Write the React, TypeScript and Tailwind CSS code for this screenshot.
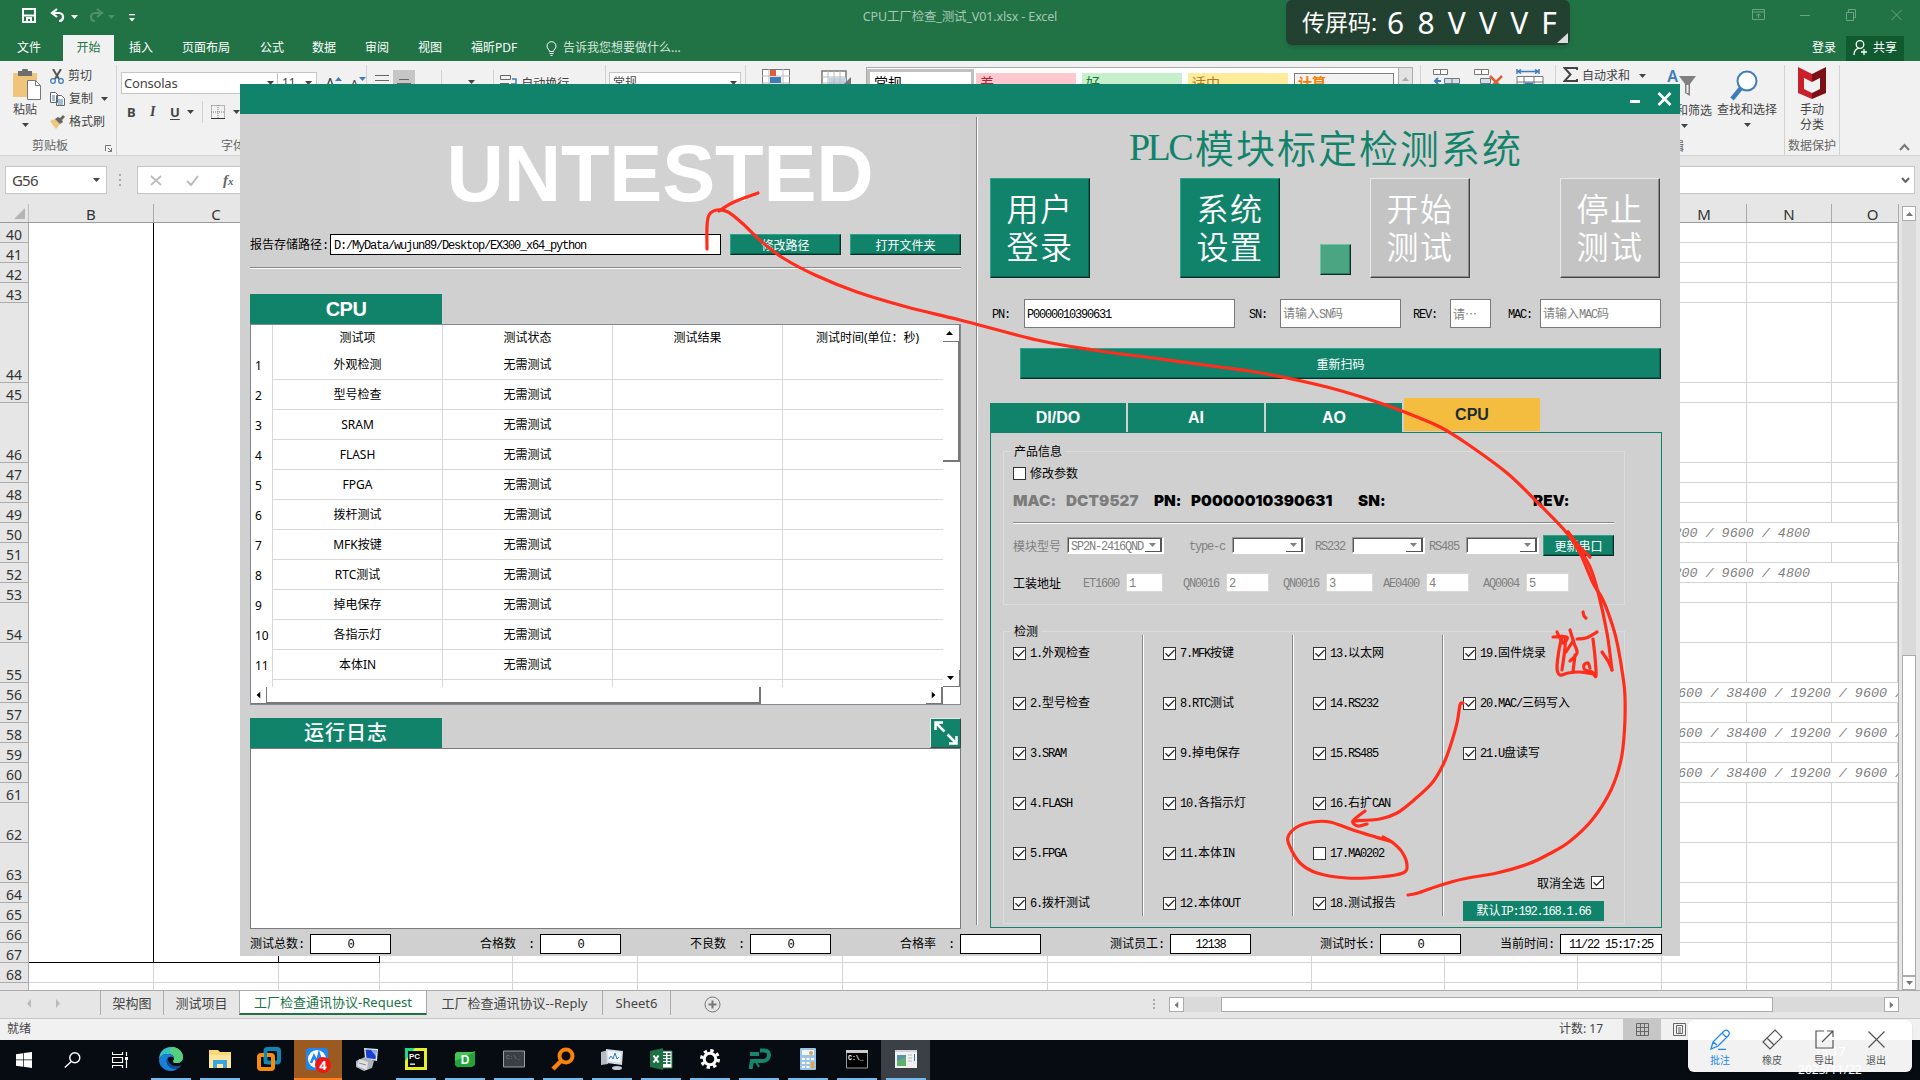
import React from "react";

const song = "font-['Noto_Sans_CJK_SC',sans-serif] text-[12px] leading-none whitespace-nowrap";

/* CJK at 12px with a 6px Latin pitch */
function Song({ children, className = "" }: { children: string; className?: string }) {
  const parts = children.split(/([\x20-\x7e]+)/).filter(Boolean);
  return (
    <span className={`${song} whitespace-pre ${className}`}>
      {parts.map((p, i) =>
        /^[\x20-\x7e]/.test(p) ? (
          <span key={i} className="font-['Liberation_Mono',monospace] text-[12px] tracking-[-1.2px]">
            {p}
          </span>
        ) : (
          p
        ),
      )}
    </span>
  );
}

const Down = ({ className = "" }: { className?: string }) => (
  <svg className={`h-1 w-[7px] shrink-0 ${className}`} viewBox="0 0 7 4">
    <path d="M0 0h7L3.5 4z" fill="currentColor" />
  </svg>
);

/* ---------- Excel title + tabs ---------- */

function TitleBar() {
  return (
    <div className="flex h-[35px] items-start">
      <div className="flex w-[240px] shrink-0 pl-[22px] pt-2 text-white">
        <svg className="h-[15px] w-[14px]" viewBox="0 0 14 15" fill="none" stroke="#fff" strokeWidth="2">
          <path d="M1 1h12v13H1zM1 7.500h12M5 14v-4h4v4" />
        </svg>
        <svg className="ml-[14px] h-[14px] w-4" viewBox="0 0 16 14" fill="none" stroke="#fff" strokeWidth="2.2">
          <path d="M7 1L2 5l5 4M2 5h7a4 4 0 014 4.500 4 4 0 01-4 3.500" />
        </svg>
        <Down className="ml-[5px] mt-[7px] w-[6px]" />
        <svg className="ml-[10px] h-[14px] w-4" viewBox="0 0 16 14" fill="none" stroke="#4f9069" strokeWidth="2.2">
          <path d="M9 1l5 4-5 4M14 5H7a4 4 0 00-4 4.500 4 4 0 004 3.500" />
        </svg>
        <Down className="ml-[4px] mt-[7px] w-[6px] text-[#4f9069]" />
        <svg className="ml-[14px] mt-[6px] h-2 w-[6px]" viewBox="0 0 6 8">
          <path d="M0 0h6v1.200H0zM0 4h6L3 7.500z" fill="#fff" />
        </svg>
      </div>
      <div className="flex h-[34px] flex-1 items-center justify-center">
        <span className="text-[12.5px] text-[#a6c8b4] tracking-[-0.15px]">CPU工厂检查_测试_V01.xlsx - Excel</span>
      </div>
      <div className="flex w-[240px] shrink-0 items-center pt-[8px] text-[#6ca286]">
        <svg className="ml-[72px] h-[13px] w-[13px]" viewBox="0 0 13 13" fill="none" stroke="currentColor">
          <path d="M.5 1.500h12v10H.5zM.5 4h12M6.500 10V6M4.500 7.800l2-2 2 2" />
        </svg>
        <svg className="ml-[35px] h-[13px] w-[10px]" viewBox="0 0 10 13" stroke="currentColor">
          <path d="M0 7.500h10" />
        </svg>
        <svg className="ml-[36px] h-[13px] w-[10px]" viewBox="0 0 10 13" fill="none" stroke="currentColor">
          <path d="M.5 4.500h7v8h-7zM2.500 4V1.500h7v8H8" />
        </svg>
        <svg className="ml-[35px] h-[13px] w-[11px]" viewBox="0 0 11 13" stroke="currentColor">
          <path d="M.5 2l10 10M10.500 2l-10 10" />
        </svg>
      </div>
    </div>
  );
}

function Tabs() {
  const tab = "shrink-0";
  return (
    <div className="flex h-[26px] items-center text-[12px] leading-none text-white whitespace-nowrap">
      <span className={`${tab} w-[46px] ml-[17px]`}>文件</span>
      <span className="flex h-full w-[51px] items-center justify-center bg-[#f1f1f1] text-[#217346]">开始</span>
      <span className={`${tab} ml-[15px] w-[53px]`}>插入</span>
      <span className={`${tab} w-[78px]`}>页面布局</span>
      <span className={`${tab} w-[52px]`}>公式</span>
      <span className={`${tab} w-[53px]`}>数据</span>
      <span className={`${tab} w-[53px]`}>审阅</span>
      <span className={`${tab} w-[53px]`}>视图</span>
      <span className={`${tab} w-[75px]`}>福昕PDF</span>
      <svg className="h-[15px] w-[11px] shrink-0" viewBox="0 0 11 15" fill="none" stroke="#fff">
        <path d="M3.500 10.500c0-2-2.500-2.700-2.500-5.300a4.500 4.500 0 019 0c0 2.600-2.500 3.300-2.500 5.300zM3.500 12.500h4M4.500 14.500h2" />
      </svg>
      <span className="ml-[6px] text-[#d7e6dd]">告诉我您想要做什么...</span>
      <span className="ml-auto">登录</span>
      <span className="ml-[10px] mr-4 flex h-[25px] w-[58px] items-center justify-center gap-[5px] bg-[#0f5a2f]">
        <svg className="h-4 w-[15px]" viewBox="0 0 15 16" fill="none" stroke="#fff" strokeWidth="1.300">
          <circle cx="7" cy="4.500" r="3.800" />
          <path d="M1 15c0-4 2-6 5-6.800M11 9v6M8 12h6" />
        </svg>
        共享
      </span>
    </div>
  );
}

/* ---------- Ribbon ---------- */

const group = "h-[90px] shrink-0 border-r border-[#d2d2d2] mt-1 overflow-hidden";

function Ribbon() {
  return (
    <div className="flex h-[95px] border-b border-[#d2d2d2] bg-[#f1f1f1] text-[12px] leading-none text-[#444] whitespace-nowrap">
      <div className={`${group} flex w-[117px] flex-col`}>
        <div className="flex h-[72px]">
          <div className="flex w-[50px] flex-col items-center pt-1">
            <svg className="ml-[3px] h-[31px] w-7" viewBox="0 0 28 31">
              <path d="M0 4h24v24H0z" fill="#eec57b" />
              <path d="M5 2h4a3 3 0 016 0h4v5H5z" fill="#6d6d6d" />
              <path d="M14.500 11.500h8l5 5v14h-13z" fill="#fff" stroke="#777" />
              <path d="M22.500 11.500v5h5" fill="none" stroke="#777" />
            </svg>
            <span className="mt-1">粘贴</span>
            <Down className="mt-[7px]" />
          </div>
          <div className="flex flex-col gap-[5px] pt-[2px]">
            <div className="flex h-[18px] items-center gap-1">
              <svg className="h-[15px] w-[14px]" viewBox="0 0 14 15" fill="none">
                <path d="M3 0l6 10M11 0L5 10" stroke="#555" strokeWidth="2" />
                <circle cx="3" cy="12" r="2.300" stroke="#3f7cba" strokeWidth="1.300" />
                <circle cx="11" cy="12" r="2.300" stroke="#3f7cba" strokeWidth="1.300" />
              </svg>
              剪切
            </div>
            <div className="flex h-[18px] items-center gap-1">
              <svg className="h-[14px] w-[15px]" viewBox="0 0 15 14" fill="#fff" stroke="#666">
                <path d="M.5.5h5l2 2v8h-7zM6.500 3.500h5l3 3v7h-8z" />
                <path d="M2 4h3M2 6h3M2 8h3M8 8h5M8 10h5M8 12h5" stroke="#3f7cba" />
              </svg>
              复制
              <Down className="ml-[4px]" />
            </div>
            <div className="flex h-[18px] items-center gap-1">
              <svg className="h-[14px] w-[15px]" viewBox="0 0 15 14">
                <path d="M0 6l5-2 5 5-4 5z" fill="#eec57b" />
                <path d="M5 4l3-2 2 1 3-3 2 2-3 3 1 2-3 2z" fill="#666" />
              </svg>
              格式刷
            </div>
          </div>
        </div>
        <div className="flex h-[18px] items-center justify-end text-[#666]">
          剪贴板
          <svg className="ml-[37px] mr-[4px] mt-1 h-[7px] w-[7px]" viewBox="0 0 7 7" fill="none" stroke="#777">
            <path d="M.5 6V.5H6M3 3l3.500 3.500M6.500 3v3.500H3" />
          </svg>
        </div>
      </div>
      <div className={`${group} flex w-[250px] flex-col pl-1`}>
        <div className="mt-[7px] flex h-[22px] shrink-0">
          <div className="flex w-[157px] items-center justify-between border border-[#c6c6c6] bg-white px-[2px] text-[13px] tracking-[-0.2px]">
            Consolas
            <Down className="mr-px" />
          </div>
          <div className="flex w-[39px] items-center justify-between border border-l-0 border-[#c6c6c6] bg-white px-1 text-[12px]">
            11
            <Down />
          </div>
          <span className="ml-2 mt-1 text-[16px]">A</span>
          <svg className="mt-1 h-2 w-[7px]" viewBox="0 0 7 8">
            <path d="M0 5l3.500-4L7 5z" fill="#3f7cba" />
          </svg>
          <span className="ml-[8px] mt-[6px] text-[13px]">A</span>
          <svg className="mt-1 h-2 w-[7px]" viewBox="0 0 7 8">
            <path d="M0 1h7L3.500 5z" fill="#3f7cba" />
          </svg>
        </div>
        <div className="flex h-[36px] shrink-0 items-center font-['Noto_Sans'] text-[13px] text-[#444]">
          <b className="ml-[6px] w-[23px]">B</b>
          <i className="w-[20px] font-['Liberation_Serif'] text-[14px] font-bold">I</i>
          <b className="w-[17px] underline underline-offset-2">U</b>
          <Down />
          <span className="ml-2 h-[22px] w-px bg-[#d2d2d2]" />
          <svg className="ml-2 h-[14px] w-[14px]" viewBox="0 0 14 14" fill="none" stroke="#777" strokeDasharray="1 1">
            <path d="M.5.5h13v13M.5.5v13M7 0v13M0 7h13" />
            <path d="M0 13.500h14" stroke="#333" strokeDasharray="none" />
          </svg>
          <Down className="ml-2" />
        </div>
        <div className="flex h-[20px] items-center pl-[100px] pt-[11px] text-[#666]">字体</div>
      </div>
      <div className={`${group} flex w-[239px] pt-[5px]`}>
        <svg className="ml-2 mt-[5px] h-5 w-[14px]" viewBox="0 0 14 20" stroke="#666">
          <path d="M0 .5h14M0 5.500h14M0 9.500h14" />
        </svg>
        <div className="ml-1 h-5 w-[22px] bg-[#c6c6c6]">
          <svg className="ml-1 mt-[9px] h-3 w-[14px]" viewBox="0 0 14 12" stroke="#666">
            <path d="M2 .5h10M0 4.500h14" />
          </svg>
        </div>
        <span className="ml-[26px] h-5 w-px bg-[#d2d2d2]" />
        <span className="ml-2 mt-[3px] -rotate-45 text-[12px]">ab</span>
        <Down className="ml-1 mt-[10px]" />
        <span className="ml-[18px] h-5 w-px bg-[#d2d2d2]" />
        <svg className="ml-[6px] mt-[5px] h-3 w-[17px]" viewBox="0 0 17 12" fill="none">
          <path d="M.5.5h10v4H.5zM0 8.500h9" stroke="#666" />
          <path d="M12 4h4v5h-5" stroke="#3f7cba" strokeWidth="1.500" />
        </svg>
        <span className="ml-[4px] mt-[8px]">自动换行</span>
      </div>
      <div className={`${group} w-[140px] pl-[3px]`}>
        <div className="mt-[7px] flex h-[22px] w-[132px] items-center justify-between border border-[#c6c6c6] bg-white px-[3px] text-[12px]">
          常规 <Down />
        </div>
      </div>
      <div className={`${group} flex w-[675px]`}>
        <svg className="ml-4 mt-1 h-[26px] w-7" viewBox="0 0 28 26">
          <path d="M0 0h28v26H0z" fill="#fff" stroke="#777" strokeWidth="2" />
          <path d="M0 7h28M0 14h28M7 0v26M21 0v26" stroke="#bbb" />
          <path d="M8 1h6v6H8zM8 15h10v6H8z" fill="#d9603b" />
          <path d="M8 8h11v6H8z" fill="#3f7cba" />
        </svg>
        <svg className="ml-[31px] mt-[5px] h-[26px] w-[30px]" viewBox="0 0 30 26">
          <path d="M1 1h24v25H1z" fill="#fff" stroke="#777" strokeWidth="1.500" />
          <path d="M8 8h17v18H8z" fill="#bfd3e9" />
          <path d="M1 7h24M1 13h24M7 1v25M13 1v25M19 1v25" stroke="#bbb" />
          <path d="M21 16l9-9v11z" fill="#777" />
        </svg>
        <div className="ml-[15px] mt-[2px] flex h-[60px] w-[533px] border border-[#ababab] bg-white text-[14px]">
          <div className="mt-[1px] h-10 w-[107px] border-[3px] border-[#c0c0c0] pl-1 pt-[4px] text-black">常规</div>
          <div className="ml-[2px] mt-[5px] h-8 w-[100px] bg-[#ffc7ce] pl-1 pt-[3px] text-[#b02030]">差</div>
          <div className="ml-[6px] mt-[5px] h-8 w-[100px] bg-[#c6efce] pl-1 pt-[3px] text-[#1c7430]">好</div>
          <div className="ml-[6px] mt-[5px] h-8 w-[100px] bg-[#ffeb9c] pl-1 pt-[3px] text-[#b07a20]">适中</div>
          <div className="ml-[6px] mt-[5px] h-8 w-[100px] border border-[#7f7f7f] bg-[#f2f2f2] pl-[3px] pt-[2px] font-bold text-[#fa7d00]">计算</div>
        </div>
        <div className="mt-[2px] flex h-[24px] w-[14px] items-center justify-center border border-l-0 border-[#ababab] bg-[#e3e3e3] text-[#ababab]">
          <Down className="rotate-180" />
        </div>
      </div>
      <div className={`${group} flex w-[135px] pt-1`}>
        <svg className="ml-3 h-[26px] w-[27px]" viewBox="0 0 27 26" fill="#fff" stroke="#777">
          <path d="M.5.5h14v5H.5zM7.500.5v5" />
          <path d="M11.500 9.500h15v5h-15zM19 9.500v5" fill="#cfe0f3" />
          <path d="M8 12H2M5 9l-3 3 3 3" stroke="#3f7cba" strokeWidth="2" fill="none" />
        </svg>
        <svg className="ml-[14px] h-[26px] w-[29px]" viewBox="0 0 29 26" fill="#fff" stroke="#777">
          <path d="M.5.5h14v5H.5zM7.500.5v5" />
          <path d="M6.500 9.500h10v5h-10z" fill="#cfe0f3" />
          <path d="M16 7l12 12M28 7L16 19" stroke="#d9603b" strokeWidth="2.500" />
        </svg>
        <svg className="ml-[13px] h-[26px] w-7" viewBox="0 0 28 26" fill="none" stroke="#777">
          <path d="M1 0v5M23 0v5M2 2.500h20M5 .5l-3 2 3 2M19 .5l3 2-3 2" stroke="#3f7cba" strokeWidth="1.500" />
          <path d="M1 7.500h26v20H1zM1 13h26M8 7v16M18 7v16" fill="#fff" />
          <path d="M9 13.500h8v8H9z" fill="#3f7cba" stroke="none" />
        </svg>
      </div>
      <div className={`${group} flex w-[229px]`}>
        <svg className="ml-[7px] mt-[2px] h-[15px] w-[15px]" viewBox="0 0 15 15" fill="none" stroke="#444" strokeWidth="2">
          <path d="M14 3V1H1.500l6 6.500-6 6.500H14v-2" />
        </svg>
        <span className="ml-1 mt-[5px]">自动求和</span>
        <Down className="ml-[9px] mt-[9px]" />
        <div className="ml-[4px] flex w-[60px] flex-col items-end pt-[3px]">
          <div className="mr-[14px] flex">
            <b className="mr-px font-['Noto_Sans'] text-[16px] font-semibold leading-none text-[#3f7cba]">A</b>
            <svg className="mt-2 h-5 w-[17px]" viewBox="0 0 17 20">
              <path d="M0 0h17l-6 8v12l-5-3V8z" fill="#808080" />
              <path d="M7.500 9h2v8h-2z" fill="#f1f1f1" />
            </svg>
          </div>
          <span className="mr-[-2px] mt-[9px]">排序和筛选</span>
          <Down className="mr-[22px] mt-[7px]" />
          <span className="mr-[26px] mt-[13px] text-[#666]">编辑</span>
        </div>
        <div className="ml-[7px] flex w-[60px] flex-col items-center pt-[4px]">
          <svg className="ml-[-6px] h-[33px] w-[28px]" viewBox="0 0 28 33" fill="none" stroke="#3f7cba">
            <path d="M2 30l9-11" strokeWidth="4.500" />
            <circle cx="17" cy="12" r="9.500" strokeWidth="2" fill="#fff" />
          </svg>
          <span className="mt-[2px]">查找和选择</span>
          <Down className="mt-[7px]" />
        </div>
      </div>
      <div className={`${group} flex w-[55px] flex-col items-center pt-[2px]`}>
        <svg className="h-[32px] w-[28px]" viewBox="0 0 28 32">
          <path d="M0 0l14 7v8l-8-4v11l8 4v6L0 26z" fill="#c8202b" />
          <path d="M28 0L14 7v8l8-4v11l-8 4v6l14-6z" fill="#7d1016" />
        </svg>
        <span className="mt-[5px]">手动</span>
        <span className="mt-[3px]">分类</span>
        <span className="mt-[9px] text-[#666]">数据保护</span>
      </div>
      <svg className="ml-auto mr-[10px] mt-[82px] h-2 w-[11px]" viewBox="0 0 11 8" fill="none" stroke="#777" strokeWidth="2">
        <path d="M1 7l4.500-5L10 7" />
      </svg>
    </div>
  );
}

function FormulaBar() {
  return (
    <div className="flex h-[48px] items-start bg-[#e6e6e6] pt-[10px]">
      <div className="ml-[5px] flex h-7 w-[102px] items-center justify-between border border-[#c6c6c6] bg-white px-[6px] text-[15px] text-[#444]">
        <span className="tracking-[-0.8px] font-['Noto_Sans']">G56</span>
        <Down />
      </div>
      <div className="ml-3 mt-2 flex w-[18px] flex-col gap-[3px]">
        <span className="h-[2px] w-[2px] bg-[#aaa]" />
        <span className="h-[2px] w-[2px] bg-[#aaa]" />
        <span className="h-[2px] w-[2px] bg-[#aaa]" />
      </div>
      <div className="flex h-7 w-[1778px] items-center border border-[#c6c6c6] bg-white">
        <svg className="ml-3 h-[11px] w-3" viewBox="0 0 12 11" stroke="#bbb" strokeWidth="1.700">
          <path d="M1 1l10 9M11 1L1 10" />
        </svg>
        <svg className="ml-6 h-[11px] w-[13px]" viewBox="0 0 13 11" fill="none" stroke="#bbb" strokeWidth="2">
          <path d="M1 6l4 4 7-9" />
        </svg>
        <i className="ml-6 font-['Liberation_Serif'] text-[15px] font-bold leading-none text-[#666]">
          f<span className="text-[11px]">x</span>
        </i>
        <svg className="ml-auto mr-1 h-[6px] w-[9px]" viewBox="0 0 9 6" fill="none" stroke="#666" strokeWidth="2">
          <path d="M1 1l3.500 4L8 1" />
        </svg>
      </div>
    </div>
  );
}

/* ---------- Sheet ---------- */

const colWidths = [125, 125, 101, 133, 125, 205, 205, 264, 133, 133, 84, 85, 85, 66];
const colNames = ["B", "C", "D", "E", "F", "G", "H", "I", "J", "K", "L", "M", "N", "O"];
const rowHeights: [number, number][] = [
  [40, 20], [41, 20], [42, 20], [43, 20], [44, 80], [45, 20], [46, 60], [47, 20], [48, 20], [49, 20],
  [50, 20], [51, 20], [52, 20], [53, 20], [54, 40], [55, 40], [56, 20], [57, 20], [58, 20], [59, 20],
  [60, 20], [61, 20], [62, 40], [63, 40], [64, 20], [65, 20], [66, 20], [67, 20], [68, 20], [69, 20],
];
const spill: Record<number, string> = {
  50: "19200 / 9600 / 4800",
  52: "19200 / 9600 / 4800",
  56: "57600 / 38400 / 19200 / 9600 / 4800",
  58: "57600 / 38400 / 19200 / 9600 / 4800",
  60: "57600 / 38400 / 19200 / 9600 / 4800",
};

function Sheet() {
  return (
    <div className="flex h-[786px] bg-[#e6e6e6]">
      <div className="flex w-[1899px] flex-col overflow-hidden border-r border-[#ababab]">
        <div className="flex h-[19px] shrink-0 border-b border-[#9b9b9b] text-[15px] leading-none text-[#333]">
          <div className="flex w-[29px] shrink-0 items-end justify-end border-r border-[#bcbcbc] pb-[3px] pr-[3px]">
            <svg className="h-[11px] w-[11px]" viewBox="0 0 11 11">
              <path d="M11 0v11H0z" fill="#b5b5b5" />
            </svg>
          </div>
          {colNames.map((n, i) => (
            <div
              key={n}
              className="flex shrink-0 items-center justify-center border-r border-[#ababab] pt-[2px]"
              style={{ width: i === 13 ? 82 : colWidths[i] }}
            >
              {n}
            </div>
          ))}
        </div>
        {rowHeights.map(([n, h]) => (
          <div key={n} className="flex shrink-0" style={{ height: h }}>
            <div className="flex w-[29px] shrink-0 items-end justify-center border-b border-r border-[#ababab] font-['Noto_Sans'] text-[14px] leading-[14px] tracking-[-0.1px] text-[#333]">
              {n}
            </div>
            {colWidths.map((w, i) => {
              if (spill[n] && i > 10) return null;
              if (n <= 67 && i < 3)
                return (
                  <div
                    key={i}
                    className={`shrink-0 border-r border-r-black bg-white ${n === 67 ? "border-b border-b-black" : ""}`}
                    style={{ width: w }}
                  />
                );
              return <div key={i} className="shrink-0 border-b border-r border-[#d4d4d4] bg-white" style={{ width: w }} />;
            })}
            {spill[n] && (
              <div
                className={`flex w-[236px] shrink-0 items-center overflow-hidden border-b border-[#d4d4d4] bg-white pt-[3px] font-['Liberation_Mono'] text-[13.4px] italic leading-none text-[#808080] whitespace-nowrap ${
                  n < 55 ? "justify-end pr-[88px]" : ""
                }`}
              >
                {spill[n]}
              </div>
            )}
          </div>
        ))}
      </div>
      <div className="ml-[3px] mt-[2px] flex h-[784px] w-[14px] flex-col bg-[#dadada]">
        <div className="flex h-[15px] items-center justify-center border border-[#ababab] bg-white text-[#777]">
          <Down className="rotate-180" />
        </div>
        <div className="mt-[434px] h-[321px] border border-[#ababab] bg-white" />
        <div className="flex h-[14px] items-center justify-center border border-[#ababab] bg-white text-[#777]">
          <Down />
        </div>
      </div>
    </div>
  );
}

function SheetTabs() {
  return (
    <div className="flex h-[29px] items-start border-t border-[#ababab] border-b border-b-[#c6c6c6] bg-[#e6e6e6] text-[13px] leading-none text-[#444] whitespace-nowrap">
      <svg className="ml-[27px] mt-2 h-[9px] w-[34px] shrink-0" viewBox="0 0 34 9" fill="#bbb">
        <path d="M4 0v9L0 4.500zM29 0v9l4-4.500z" />
      </svg>
      <div className="ml-[39px] flex h-6 w-[63px] items-center justify-center border-l border-[#ababab]">架构图</div>
      <div className="flex h-6 w-[76px] items-center justify-center border-l border-[#ababab]">测试项目</div>
      <div className="flex h-6 w-[188px] items-center justify-center border-b-2 border-l border-r border-[#ababab] border-b-[#217346] bg-white text-[#217346]">
        工厂检查通讯协议-Request
      </div>
      <div className="flex h-6 w-[176px] items-center justify-center border-r border-[#ababab]">工厂检查通讯协议--Reply</div>
      <div className="flex h-6 w-[68px] items-center justify-center border-r border-[#ababab]">Sheet6</div>
      <svg className="ml-[33px] mt-[5px] h-[17px] w-[17px]" viewBox="0 0 17 17" fill="none" stroke="#777">
        <circle cx="8.500" cy="8.500" r="7.500" />
        <path d="M8.500 4.500v8M4.500 8.500h8" strokeWidth="2" />
      </svg>
      <div className="ml-auto mr-[14px] mt-2 flex flex-col gap-[2px]">
        <span className="h-[2px] w-[2px] bg-[#aaa]" />
        <span className="h-[2px] w-[2px] bg-[#aaa]" />
        <span className="h-[2px] w-[2px] bg-[#aaa]" />
      </div>
      <div className="mr-[21px] mt-[6px] flex h-[15px] w-[730px] bg-[#dadada]">
        <div className="flex w-[15px] items-center justify-center border border-[#ababab] bg-white text-[#777]">
          <Down className="rotate-90" />
        </div>
        <div className="ml-[37px] w-[552px] border border-[#ababab] bg-white" />
        <div className="ml-auto flex w-[15px] items-center justify-center border border-[#ababab] bg-white text-[#777]">
          <Down className="-rotate-90" />
        </div>
      </div>
    </div>
  );
}

function StatusBar() {
  return (
    <div className="flex h-[21px] items-center bg-[#f1f1f1] text-[12px] leading-none text-[#444]">
      <span className="ml-[7px] pb-[2px]">就绪</span>
      <span className="ml-[1528px] pb-[2px]">计数: 17</span>
      <div className="ml-auto mr-[8px] flex h-full w-[289px] items-center">
        <div className="flex h-full w-[38px] items-center justify-center bg-[#c6c6c6]">
          <svg className="h-[13px] w-[13px]" viewBox="0 0 13 13" fill="none" stroke="#666">
            <path d="M.5.5h12v12H.5zM.5 4.500h12M.5 8.500h12M4.500.5v12M8.500.5v12" />
          </svg>
        </div>
        <svg className="ml-3 h-[13px] w-[13px]" viewBox="0 0 13 13" fill="none" stroke="#666">
          <path d="M.5.5h12v12H.5zM3.500 2.500h6v8h-6zM5 5h3M5 7h3M5 9h3" />
        </svg>
      </div>
    </div>
  );
}

/* ---------- Taskbar ---------- */

function TaskIcon({ children, bar = true, bg = "" }: { children: React.ReactNode; bar?: boolean; bg?: string }) {
  return (
    <div className={`flex h-10 w-[49px] shrink-0 flex-col items-center ${bg}`}>
      <div className="flex h-[38px] items-center">
        <svg className="h-6 w-6" viewBox="0 0 24 24">
          {children}
        </svg>
      </div>
      {bar && <div className="h-[2px] w-10 bg-[#76b9ed]" />}
    </div>
  );
}

const cmdFont = "font-['Liberation_Mono']";

function Taskbar() {
  return (
    <div className="relative flex h-10 bg-[#070b12]">
      <div className="flex w-[146px] shrink-0">
        <div className="flex w-12 items-center justify-center">
          <svg className="h-4 w-4" viewBox="0 0 16 16" fill="#fff">
            <path d="M0 2.300L7 1.200v6.300H0zM7.700 1.100L16 0v7.500H7.700zM0 8.300h7v6.400L0 13.700zM7.700 8.300H16V16l-8.300-1.200z" />
          </svg>
        </div>
        <div className="flex w-12 items-center justify-center">
          <svg className="h-4 w-[17px]" viewBox="0 0 17 16" fill="none" stroke="#fff" strokeWidth="1.400">
            <circle cx="10.800" cy="5.800" r="5" />
            <path d="M7.300 9.500L.8 15.500" />
          </svg>
        </div>
        <div className="flex w-12 items-center justify-center">
          <svg className="h-4 w-[17px]" viewBox="0 0 17 16" fill="none" stroke="#fff">
            <path d="M.5 0v2.500h10V0M.5 5.500h10v5H.5zM.5 16v-2.500h10V16M14.500 0v4M14.500 8v8" strokeWidth="1.200" />
            <path d="M13 5h3v3h-3z" fill="#fff" stroke="none" />
          </svg>
        </div>
      </div>
      <TaskIcon>
        <path d="M0 13C0 5 5 0 12 0s12 5 12 10c0 4-3 6-6 6-2 0-4-.500-4-1.500s1-1 1-3C15 8 12 7 9 7 5 7 1 9 0 13z" fill="#36bfc4" />
        <path d="M13 0c7 .5 11 5 11 10 0 4-3 6-6 6-2 0-4-.500-4-1.500s1-1 1-3c0-2-1-3.500-3-4.200C10 4 11 1 13 0z" fill="#55cf7e" />
        <path d="M0 13c1-4 4-6 9-6 3 0 6 2 6 4-1-1-2.500-1.500-4-1.200C7 10.500 7 15 9 18c2 3 6 4 9 4-2 1.500-4 2-6 2-7 0-12-5-12-11z" fill="#1b7fd6" />
        <path d="M9 18c-2-3-2-6.500.5-8C8 13 10 18 16 19c3 .5 5-.300 6.500-1-1 2-2.500 3.300-4.500 4-3 .500-7-1-9-4z" fill="#0d4f9e" />
      </TaskIcon>
      <TaskIcon>
        <path d="M1 3h9l2 2h11v16H1z" fill="#fbd877" />
        <path d="M1 8h22v13H1z" fill="#ffe69d" />
        <path d="M5 21v-8h14v8h-4v-4H9v4z" fill="#3ba5e0" />
      </TaskIcon>
      <TaskIcon bar={false}>
        <rect x="8.500" y="2" width="13.500" height="13.500" rx="2" fill="none" stroke="#0f86b4" strokeWidth="4" />
        <rect x="2" y="8" width="14" height="14" rx="2" fill="none" stroke="#f58c0f" strokeWidth="4" />
        <path d="M8.500 6v9.500H12" fill="none" stroke="#0f86b4" strokeWidth="3" />
      </TaskIcon>
      <div className="ml-px flex h-10 w-12 shrink-0 flex-col items-center border-b-2 border-[#ff7f1a] bg-[#9a5a22]">
        <svg className="mt-[7px] h-[26px] w-[26px]" viewBox="0 0 26 26">
          <rect x="1" y="1" width="22" height="22" rx="4" fill="#1f87f2" />
          <circle cx="12" cy="12" r="9" fill="#fff" />
          <path d="M6 16l3-7 3 6 2-8 3 9" fill="none" stroke="#1f87f2" strokeWidth="2.500" />
          <circle cx="18" cy="18" r="8" fill="#f01616" />
          <text x="18" y="23" textAnchor="middle" fontSize="13" fontWeight="bold" fill="#fff" fontFamily="Noto Sans">4</text>
        </svg>
      </div>
      <TaskIcon bar={false}>
        <path d="M9 1l14 1-1 12-12-2z" fill="#dfe6ee" />
        <path d="M10.500 2.500l11 .8-1 9-9-1.300z" fill="#1b3fd0" />
        <path d="M16 3l5.500.3-.6 6z" fill="#8fb0f5" />
        <path d="M1 14l9-4 9 4-2 7-8 3-8-4z" fill="#aeb4bb" />
        <path d="M4 12l9 3-1 8-10-4z" fill="#dde1e5" />
        <path d="M4 16l7 2" stroke="#888" />
      </TaskIcon>
      <TaskIcon>
        <path d="M1 1h22v22H1z" fill="#e6f02a" />
        <path d="M1 1h10L1 14z" fill="#21d789" />
        <path d="M4 4h16v16H4z" fill="#0a0a0a" />
        <text x="5" y="12" fontSize="8" fontWeight="bold" fill="#fff" fontFamily="Liberation Sans">PC</text>
        <path d="M6 16.500h5v1.300H6z" fill="#fff" />
      </TaskIcon>
      <TaskIcon>
        <path d="M4 5h15l3-1v14l-3 2H4l-2-2V7z" fill="#1fa53a" />
        <path d="M4 5h18L2 14V7z" fill="#43c454" />
        <text x="12" y="17" textAnchor="middle" fontSize="12" fontWeight="bold" fill="#fff" fontFamily="Liberation Sans">D</text>
      </TaskIcon>
      <TaskIcon>
        <path d="M1.500 4h21v16h-21z" fill="#3a3f44" stroke="#9aa0a5" />
        <text x="4" y="12" fontSize="6" fill="#888" className={cmdFont}>C:\_</text>
      </TaskIcon>
      <TaskIcon>
        <circle cx="15" cy="9" r="6.500" fill="none" stroke="#f7820c" strokeWidth="4" />
        <path d="M10 14l-8 8" stroke="#f7820c" strokeWidth="4.500" />
      </TaskIcon>
      <TaskIcon>
        <path d="M1 5l7-2v14l-7 1z" fill="#b8bcc0" />
        <path d="M6 2l17 2-1 14-15-2z" fill="#d8dde2" />
        <path d="M8 4l13 1.500-1 10L8.500 14z" fill="#eef6fc" />
        <path d="M9 12l2-3 2 3 2-6 2 6 2-2" fill="none" stroke="#2f7fc4" />
        <ellipse cx="17" cy="21" rx="5" ry="2" fill="#c8ccd0" />
      </TaskIcon>
      <TaskIcon>
        <path d="M10 4h13v17H10z" fill="#fff" stroke="#217346" />
        <path d="M14 7h3M18.500 7h3M14 10h3M18.500 10h3M14 13h3M18.500 13h3M14 16h3M18.500 16h3" stroke="#217346" strokeWidth="1.800" />
        <path d="M1 4l13-3v22L1 20z" fill="#1d7044" />
        <path d="M4.500 8.500l5 7M9.500 8.500l-5 7" stroke="#fff" strokeWidth="2" />
      </TaskIcon>
      <TaskIcon>
        <circle cx="12" cy="12" r="5.800" fill="none" stroke="#fff" strokeWidth="3" />
        <circle cx="12" cy="12" r="8.500" fill="none" stroke="#fff" strokeWidth="3" strokeDasharray="3.340 3.340" />
      </TaskIcon>
      <TaskIcon>
        <path d="M3 7h9" stroke="#16876c" strokeWidth="4" />
        <path d="M13 3.500h4c3.500 0 5 2 5 4.500s-2 6-6 6H5l-1.500 8" fill="none" stroke="#16876c" strokeWidth="4" />
        <path d="M8 13l4 7" stroke="#16876c" strokeWidth="2" />
      </TaskIcon>
      <TaskIcon>
        <rect x="4" y="1" width="16" height="22" rx="1" fill="#9cc4e4" />
        <path d="M6 3h12v5H6z" fill="#eaf5fd" />
        <path d="M6 11h3v2H6zM10.500 11h3v2h-3zM15 11h3v2h-3zM6 15h3v2H6zM10.500 15h3v2h-3zM6 19h3v2H6zM10.500 19h3v2h-3z" fill="#fff" />
        <path d="M15 15h3v6h-3z" fill="#e7a23b" />
        <circle cx="15" cy="6" r="2" fill="#e7a23b" />
      </TaskIcon>
      <TaskIcon>
        <path d="M1.500 4h21v17h-21z" fill="#000" stroke="#999" />
        <path d="M1 3h22v3H1z" fill="#ccc" />
        <text x="3" y="13" fontSize="6.500" fontWeight="bold" fill="#fff" className={cmdFont}>C:\_</text>
      </TaskIcon>
      <TaskIcon bg="bg-[#3b4046]">
        <path d="M1 4h22v17H1z" fill="#f0f0f0" />
        <path d="M1 3h22v2H1z" fill="#d0d4d8" />
        <path d="M3 8h9v11H3z" fill="#5a8fb0" />
        <path d="M3 14l9-4v9H3z" fill="#5fae6b" />
        <path d="M14 8h4M14 11h4M14 14h4" stroke="#ccc" strokeWidth="1.500" />
        <path d="M20.500 7v7" stroke="#3a6fb5" />
      </TaskIcon>
      <div className="ml-auto mr-[50px] flex w-[80px] flex-col items-center pt-[3px] text-[12px] leading-[18px] text-white">
        <span>15:17</span>
        <span>2023/11/22</span>
      </div>
    </div>
  );
}

/* ---------- Test application window ---------- */

const bevel =
  "flex items-center justify-center border border-[#2aa58b] border-b-[#0a2f27] border-r-[#0a2f27] bg-[#12836b] text-white shadow-[inset_-1px_-1px_0_#0d6351]";
const hr = "h-[2px] shrink-0 border-t border-[#868686] bg-white";

const items = ["外观检测", "型号检查", "SRAM", "FLASH", "FPGA", "拨杆测试", "MFK按键", "RTC测试", "掉电保存", "各指示灯", "本体IN"];

function ResultTable() {
  const cell = "flex shrink-0 items-center justify-center border-r border-[#d8d8d8]";
  return (
    <div className="flex h-[381px] w-[711px] flex-col border border-[#828790] bg-white text-[12px] leading-none text-black">
      <div className="flex h-[362px]">
        <div className="flex w-[692px] flex-col overflow-hidden">
          <div className="flex h-[25px] shrink-0">
            <div className={`${cell} w-[22px]`} />
            <div className={`${cell} w-[170px]`}>测试项</div>
            <div className={`${cell} w-[170px]`}>测试状态</div>
            <div className={`${cell} w-[170px]`}>测试结果</div>
            <div className={`${cell} w-[170px]`}>测试时间(单位：秒)</div>
          </div>
          {[...items, ""].map((t, i) => (
            <div key={i} className="flex h-[30px] shrink-0">
              <div className="flex w-[22px] shrink-0 items-center border-r border-[#d8d8d8] pl-1 pt-px font-['Noto_Sans']">{t && i + 1}</div>
              <div className={`${cell} w-[170px] border-b`}>{t}</div>
              <div className={`${cell} w-[170px] border-b`}>{t && "无需测试"}</div>
              <div className={`${cell} w-[170px] border-b`} />
              <div className={`${cell} w-[170px] border-b`} />
            </div>
          ))}
        </div>
        <div className="flex w-[17px] flex-col text-black">
          <div className="flex h-[17px] items-center justify-center border-b border-r border-[#777]">
            <Down className="mr-[3px] rotate-180" />
          </div>
          <div className="h-[120px] border-b-2 border-r-2 border-[#777]" />
          <div className="mt-auto flex h-[17px] items-center justify-center border-b border-r border-[#777]">
            <Down className="mr-[2px]" />
          </div>
        </div>
      </div>
      <div className="flex h-[17px] text-black">
        <div className="flex w-4 items-center justify-center border-b border-r border-[#777]">
          <Down className="rotate-90" />
        </div>
        <div className="w-[494px] border-b-2 border-r-2 border-[#777]" />
        <div className="ml-auto flex w-[17px] items-center justify-center border-b border-r-2 border-[#777]">
          <Down className="-rotate-90" />
        </div>
        <div className="w-[17px]" />
      </div>
    </div>
  );
}

function LeftPane() {
  return (
    <div className="flex w-[726px] shrink-0 flex-col pl-[10px]">
      <div className="ml-[110px] mt-[10px] flex h-[110px] w-[600px] items-start justify-center bg-[#d2d2d2] pt-[10px]">
        <span className="font-['Liberation_Sans'] text-[79.5px] font-bold leading-none tracking-[-0.2px] text-white">UNTESTED</span>
      </div>
      <div className="flex h-[21px] items-center">
        <Song className="w-20 text-black">报告存储路径:</Song>
        <div className="flex h-[21px] w-[391px] items-center border border-black bg-white pl-[3px]">
          <Song className="text-black">D:/MyData/wujun89/Desktop/EX300_x64_python</Song>
        </div>
        <button className={`${bevel} ml-[9px] h-[21px] w-[111px]`}>
          <Song>修改路径</Song>
        </button>
        <button className={`${bevel} ml-[9px] h-[21px] w-[111px]`}>
          <Song>打开文件夹</Song>
        </button>
      </div>
      <div className={`${hr} mt-3 w-[711px]`} />
      <div className="mt-[25px] flex h-[30px] w-[192px] items-center justify-center bg-[#12836b] font-['Liberation_Sans'] text-[20px] font-bold leading-none tracking-[-0.5px] text-white">
        CPU
      </div>
      <ResultTable />
      <div className="mt-[13px] flex h-[30px] w-[711px] justify-between">
        <div className="flex w-[192px] items-center justify-center bg-[#12836b] text-[20px] font-medium leading-none tracking-[1px] text-white">
          运行日志
        </div>
        <button className="flex w-[31px] items-center justify-center border border-[#e8e8e8] border-b-[#444] border-r-[#444] bg-[#12836b]">
          <svg className="h-6 w-6" viewBox="0 0 24 24" fill="none" stroke="#fff" strokeWidth="2.500">
            <path d="M1.500 9V1.500H9M2 2l8.500 8.500M22.500 15v7.500H15M22 22l-8.500-8.500" />
          </svg>
        </button>
      </div>
      <div className="h-[181px] w-[711px] border border-[#7a7a7a] bg-white" />
    </div>
  );
}

function BigButton({ a, b, on, ml }: { a: string; b: string; on: boolean; ml: string }) {
  return (
    <button
      className={`${ml} flex h-[100px] w-[100px] flex-col items-center justify-center border text-[32px] font-[350] leading-[38px] tracking-[1.5px] text-white ${
        on
          ? "border-[#2aa58b] border-b-[#0a2f27] border-r-[#0a2f27] bg-[#12836b] shadow-[inset_-1px_-1px_0_#0d6351]"
          : "border-[#e8e8e8] border-b-[#444] border-r-[#444] bg-[#c4c4c4] shadow-[inset_-1px_-1px_0_#8a8a8a]"
      }`}
    >
      <span>{a}</span>
      <span>{b}</span>
    </button>
  );
}

function Field({ label, w, value, placeholder, lw }: { label: string; w: string; lw: string; value?: string; placeholder?: string }) {
  return (
    <div className="flex h-[29px] items-center">
      <Song className={`${lw} text-black`}>{label}</Song>
      <div className={`flex h-[29px] ${w} items-center border border-[#7a7a7a] bg-white pl-[2px]`}>
        <Song className={value ? "text-black" : "text-[#808080]"}>{value ?? placeholder ?? ""}</Song>
      </div>
    </div>
  );
}

function Check({ label, checked = true }: { label: string; checked?: boolean }) {
  return (
    <label className="flex h-[14px] items-center gap-1 text-black">
      <Box checked={checked} />
      <Song>{label}</Song>
    </label>
  );
}

function Box({ checked }: { checked: boolean }) {
  return (
    <span className="flex h-[13px] w-[13px] shrink-0 items-center justify-center border border-[#333] bg-white">
      {checked && (
        <svg className="h-[9px] w-[10px]" viewBox="0 0 10 9" fill="none" stroke="#333" strokeWidth="1.300">
          <path d="M.5 4.200l3 3L9.500 1" />
        </svg>
      )}
    </span>
  );
}

function Combo({ w, value = "" }: { w: string; value?: string }) {
  return (
    <div className={`flex h-[17px] ${w} shrink-0 items-center border-b-2 border-l border-r-2 border-t border-white border-l-[#999] border-t-[#999] bg-white`}>
      <div className="flex h-full flex-1 items-center justify-between border border-b-0 border-[#555] pl-[2px]">
        <Song className="text-[#808080]">{value}</Song>
        <span className="flex h-full w-4 items-center justify-center border-b border-r border-[#555] text-[#808080]">
          <Down />
        </span>
      </div>
    </div>
  );
}

function Addr({ label, value, w, gap }: { label: string; value: string; w: string; gap: string }) {
  return (
    <div className={`flex items-center ${gap}`}>
      <Song className="w-[43px] text-[#808080]">{label}</Song>
      <div className={`flex h-[19px] ${w} items-center border border-[#d8d8d8] bg-white pl-[2px]`}>
        <Song className="text-[#808080]">{value}</Song>
      </div>
    </div>
  );
}

const checks = [
  ["1.外观检查", "2.型号检查", "3.SRAM", "4.FLASH", "5.FPGA", "6.拨杆测试"],
  ["7.MFK按键", "8.RTC测试", "9.掉电保存", "10.各指示灯", "11.本体IN", "12.本体OUT"],
  ["13.以太网", "14.RS232", "15.RS485", "16.右扩CAN", "17.MA0202", "18.测试报告"],
];

const heavy = "font-['Inter','Liberation_Sans',sans-serif] font-black text-[15.2px] tracking-[0.1px] leading-none whitespace-nowrap";

function CpuPanel() {
  return (
    <div className="flex h-[496px] w-[672px] flex-col border border-[#12836b] pl-3">
      <fieldset className="mt-[10px] flex h-[162px] w-[622px] flex-col border border-[#dcdcdc] pl-[9px]">
        <legend className="ml-[-2px] flex h-4 items-center px-[3px] text-black">
          <Song>产品信息</Song>
        </legend>
        <div className="mt-[7px]">
          <Check label="修改参数" checked={false} />
        </div>
        <div className="mt-[13px] flex h-4 items-center text-black">
          <span className={`${heavy} w-[53px] text-[#7c7c7c]`}>MAC:</span>
          <span className={`${heavy} w-[88px] text-[#7c7c7c]`}>DCT9527</span>
          <span className={`${heavy} w-[37px]`}>PN:</span>
          <span className={`${heavy} w-[167px]`}>P0000010390631</span>
          <span className={`${heavy} w-[175px]`}>SN:</span>
          <span className={heavy}>REV:</span>
        </div>
        <div className={`${hr} mt-[13px] w-[601px]`} />
        <div className="mt-[11px] flex h-[21px] items-center">
          <Song className="w-[54px] text-[#808080]">模块型号</Song>
          <Combo w="w-[97px]" value="SP2N-2416QND" />
          <Song className="ml-[25px] w-[43px] text-[#808080]">type-c</Song>
          <Combo w="w-[73px]" />
          <Song className="ml-[10px] w-[37px] text-[#808080]">RS232</Song>
          <Combo w="w-[73px]" />
          <Song className="ml-[4px] w-[37px] text-[#808080]">RS485</Song>
          <Combo w="w-[73px]" />
          <button className={`${bevel} ml-[4px] h-[21px] w-[71px]`}>
            <Song>更新串口</Song>
          </button>
        </div>
        <div className="mt-[17px] flex h-[19px] items-center">
          <Song className="w-[70px] text-black">工装地址</Song>
          <Addr label="ET1600" value="1" w="w-[37px]" gap="" />
          <Addr label="QN0016" value="2" w="w-[43px]" gap="ml-5" />
          <Addr label="QN0016" value="3" w="w-[47px]" gap="ml-[14px]" />
          <Addr label="AE0400" value="4" w="w-[43px]" gap="ml-[10px]" />
          <Addr label="AQ0004" value="5" w="w-[43px]" gap="ml-[14px]" />
        </div>
      </fieldset>
      <fieldset className="mt-[18px] flex h-[301px] w-[622px] border border-[#dcdcdc] pl-[9px]">
        <legend className="ml-[-2px] flex h-4 items-center px-[3px] text-black">
          <Song>检测</Song>
        </legend>
        <div className="flex h-[284px]">
          {checks.map((col, c) => (
            <div key={c} className="flex w-[150px]">
              <div className="mt-[7px] flex w-[129px] flex-col gap-9">
                {col.map((t) => (
                  <Check key={t} label={t} checked={!t.startsWith("17.")} />
                ))}
              </div>
              <div className="mt-[-4px] h-[281px] w-[2px] border-l border-[#868686] bg-white" />
            </div>
          ))}
          <div className="mt-[7px] flex w-[141px] flex-col">
            <div className="flex flex-col gap-9">
              <Check label="19.固件烧录" />
              <Check label="20.MAC/三码写入" />
              <Check label="21.U盘读写" />
            </div>
            <div className="mt-[116px] flex items-center justify-end gap-[6px] text-black">
              <Song>取消全选</Song>
              <Box checked />
            </div>
            <button className="mt-3 flex h-5 w-[141px] items-center justify-center bg-[#12836b] text-white">
              <Song>默认IP:192.168.1.66</Song>
            </button>
          </div>
        </div>
      </fieldset>
    </div>
  );
}

function RightPane() {
  const tab = "flex h-[29px] w-[136px] items-center justify-center bg-[#12836b] text-white";
  return (
    <div className="flex flex-1 flex-col pl-3">
      <div className="mt-2 flex h-[50px] w-[672px] items-center justify-center whitespace-nowrap text-[#12836b]">
        <span className="font-['Liberation_Serif'] text-[38px] leading-none tracking-[-2.500px]">PLC</span>
        <span className="ml-1 text-[39px] font-[350] leading-none tracking-[2px]">模块标定检测系统</span>
      </div>
      <div className="mt-[6px] flex h-[100px]">
        <BigButton a="用户" b="登录" on ml="" />
        <BigButton a="系统" b="设置" on ml="ml-[90px]" />
        <div className="ml-10 mt-[66px] h-[31px] w-[31px] border border-[#6fc4a8] border-b-[#0a2f27] border-r-[#0a2f27] bg-[#4ba583] shadow-[inset_-1px_-1px_0_#2c7a60]" />
        <BigButton a="开始" b="测试" on={false} ml="ml-[19px]" />
        <BigButton a="停止" b="测试" on={false} ml="ml-[90px]" />
      </div>
      <div className="mt-[21px] flex pl-[2px]">
        <Field label="PN:" lw="w-8" w="w-[211px]" value="P0000010390631" />
        <div className="w-[14px]" />
        <Field label="SN:" lw="w-[31px]" w="w-[121px]" placeholder="请输入SN码" />
        <div className="w-[12px]" />
        <Field label="REV:" lw="w-[37px]" w="w-[41px]" placeholder="请⋯" />
        <div className="w-[17px]" />
        <Field label="MAC:" lw="w-[32px]" w="w-[121px]" placeholder="请输入MAC码" />
      </div>
      <button className={`${bevel} ml-[30px] mt-5 h-[31px] w-[641px]`}>
        <Song>重新扫码</Song>
      </button>
      <div className="mt-[19px] flex h-[34px] items-end gap-[2px] font-['Liberation_Sans'] text-[16px] font-bold leading-none">
        <div className={tab}>DI/DO</div>
        <div className={tab}>AI</div>
        <div className={tab}>AO</div>
        <div className="mb-px flex h-[33px] w-[136px] items-center justify-center bg-[#f5bd3f] text-[#1c2b38]">CPU</div>
      </div>
      <CpuPanel />
    </div>
  );
}

function Stat({ label, value, w = "w-[81px]", cell = "w-[210px]" }: { label: string; value: string; w?: string; cell?: string }) {
  return (
    <div className={`flex ${cell} shrink-0 items-center text-black`}>
      <Song className="w-[60px]">{label}</Song>
      <div className={`flex h-5 ${w} items-center justify-center border border-black bg-white`}>
        <Song>{value}</Song>
      </div>
    </div>
  );
}

function TestWindow() {
  return (
    <div className="absolute left-[240px] top-[84px] flex h-[872px] w-[1440px] flex-col bg-[#d0d0d0]">
      <div className="flex h-[30px] shrink-0 items-center justify-end bg-[#12836b] pr-2">
        <svg className="h-[14px] w-[42px]" viewBox="0 0 42 14" stroke="#fff" fill="none">
          <path d="M0 9.500h10" strokeWidth="3" />
          <path d="M28.500 1l12 12M40.500 1l-12 12" strokeWidth="2.600" />
        </svg>
      </div>
      <div className="flex h-[816px] shrink-0">
        <LeftPane />
        <div className="ml-[10px] mt-[3px] h-[808px] w-[2px] border-l border-[#868686] bg-white" />
        <RightPane />
      </div>
      <div className="mt-[4px] flex h-5 shrink-0 pl-[10px]">
        <Stat label="测试总数:" value="0" cell="w-[230px]" />
        <Stat label="合格数  :" value="0" />
        <Stat label="不良数  :" value="0" />
        <Stat label="合格率  :" value="" />
        <Stat label="测试员工:" value="12138" />
        <Stat label="测试时长:" value="0" cell="w-[180px]" />
        <Stat label="当前时间:" value="11/22 15:17:25" w="w-[102px]" />
      </div>
    </div>
  );
}

/* ---------- Pen annotations ---------- */

type Pt = [number, number];

function smooth(p: Pt[]) {
  let d = `M${p[0][0]} ${p[0][1]}`;
  for (let i = 0; i < p.length - 1; i++) {
    const a = p[Math.max(i - 1, 0)];
    const b = p[i];
    const c = p[i + 1];
    const e = p[Math.min(i + 2, p.length - 1)];
    d += `C${b[0] + (c[0] - a[0]) / 6} ${b[1] + (c[1] - a[1]) / 6} ${c[0] - (e[0] - b[0]) / 6} ${c[1] - (e[1] - b[1]) / 6} ${c[0]} ${c[1]}`;
  }
  return d;
}

const strokes: Pt[][] = [
  [[707, 249], [707, 227], [709, 215], [717, 210], [728, 212], [742, 223], [762, 242], [783, 258], [815, 275], [857, 292], [907, 307], [960, 320], [1037, 340], [1093, 350], [1153, 358], [1220, 367], [1267, 374], [1327, 387], [1380, 403], [1417, 417], [1440, 427], [1466, 443], [1507, 473], [1538, 503], [1566, 532], [1580, 553], [1593, 583], [1603, 600], [1613, 627], [1618, 647], [1623, 677], [1625, 697], [1624.500, 730], [1621, 760], [1611, 790], [1592, 820], [1569, 842], [1549, 854], [1528, 864], [1497, 873], [1463, 879], [1438, 886], [1418, 893], [1408, 895]],
  [[719, 211], [734, 202], [758, 193]],
  [[1568, 532], [1578, 545], [1590, 557]],
  [[1568, 532], [1580, 550], [1590, 567], [1598, 592], [1607, 633], [1612, 670]],
  [[1612, 670], [1608, 661], [1602, 652]],
  [[1463, 703], [1460, 705], [1457, 723], [1450, 747], [1443, 765], [1432, 783], [1414, 800], [1397, 813], [1380, 819], [1353, 821]],
  [[1365, 811], [1353, 821], [1358, 826], [1367, 824]],
  [[1392, 842], [1353, 830], [1330, 822], [1313, 822], [1297, 827], [1288, 837], [1290, 847], [1300, 863], [1317, 873], [1347, 878], [1380, 877], [1403, 873], [1407, 865], [1402, 852], [1392, 842], [1383, 837]],
  [[1553, 637], [1567, 637], [1563, 643], [1557, 632]],
  [[1562, 636], [1559, 650], [1557, 668], [1560, 675], [1568, 673], [1580, 672], [1593, 674]],
  [[1565, 637], [1565, 648], [1562, 670]],
  [[1570, 630], [1574, 643], [1577, 653], [1570, 661]],
  [[1573, 641], [1566, 652]],
  [[1575, 655], [1573, 672]],
  [[1577, 639], [1586, 638], [1597, 632]],
  [[1593, 639], [1595, 657], [1596, 676], [1592, 672], [1585, 670], [1584, 665], [1588, 663], [1590, 668]],
  [[1583, 612], [1584, 616], [1586, 618]],
];

function Ink() {
  return (
    <svg
      className="pointer-events-none absolute left-0 top-0 h-[1080px] w-[1920px]"
      viewBox="0 0 1920 1080"
      fill="none"
      stroke="#ff2d1c"
      strokeWidth="3.200"
      strokeLinecap="round"
      strokeLinejoin="round"
    >
      {strokes.map((s, i) => (
        <path key={i} d={smooth(s)} />
      ))}
    </svg>
  );
}

function PenToolbar() {
  const btn = "flex w-[52px] flex-col items-center gap-[5px]";
  return (
    <div className="absolute left-[1688px] top-[1020px] flex h-[52px] w-[224px] rounded-md bg-white/95 pl-[6px] pt-[9px] text-[10px] leading-none text-[#555] shadow">
      <div className={`${btn} text-[#1f87f2]`}>
        <svg className="h-[21px] w-[21px]" viewBox="0 0 21 21" fill="none" stroke="currentColor" strokeWidth="1.300">
          <path d="M1 20l2-7L14 2q3-2 5 1 1 2-1 4L8 17zM12 4l4.500 4.500M8 20.300h8M3 13l4 3" />
        </svg>
        批注
      </div>
      <div className={btn}>
        <svg className="h-[21px] w-[21px]" viewBox="0 0 21 21" fill="none" stroke="currentColor" strokeWidth="1.200">
          <path d="M13 1l7 7-12 12-7-7zM5 9l7 7" />
        </svg>
        橡皮
      </div>
      <div className={btn}>
        <svg className="h-[21px] w-[21px]" viewBox="0 0 21 21" fill="none" stroke="currentColor" strokeWidth="1.200">
          <path d="M10 2H2v17h17v-8M13 2h6v6M19 2L8 13" />
        </svg>
        导出
      </div>
      <div className={btn}>
        <svg className="h-[21px] w-[21px]" viewBox="0 0 21 21" stroke="currentColor" strokeWidth="1.200">
          <path d="M2.500 2.500l16 16M18.500 2.500l-16 16" />
        </svg>
        退出
      </div>
    </div>
  );
}

function CastCode() {
  return (
    <div className="absolute left-[1286px] top-0 flex h-[45px] w-[284px] items-center rounded-md bg-[#234130] text-white shadow-md whitespace-nowrap">
      <span className="ml-4 w-[85px] text-[23px] leading-none">传屏码:</span>
      <span className="flex w-[170px] justify-between text-[30px] leading-none">
        <span>6</span>
        <span>8</span>
        <span>V</span>
        <span>V</span>
        <span>V</span>
        <span>F</span>
      </span>
      <svg className="mb-[2px] h-[10px] w-[11px] self-end" viewBox="0 0 11 10">
        <path d="M11 0v10H0z" fill="#ddd" />
      </svg>
    </div>
  );
}

export default function App() {
  return (
    <div className="relative flex h-[1080px] w-[1920px] flex-col overflow-hidden font-['Noto_Sans','Noto_Sans_CJK_SC',sans-serif]">
      <div className="bg-[#217346]">
        <TitleBar />
        <Tabs />
      </div>
      <Ribbon />
      <FormulaBar />
      <Sheet />
      <SheetTabs />
      <StatusBar />
      <Taskbar />
      <TestWindow />
      <Ink />
      <CastCode />
      <PenToolbar />
    </div>
  );
}
